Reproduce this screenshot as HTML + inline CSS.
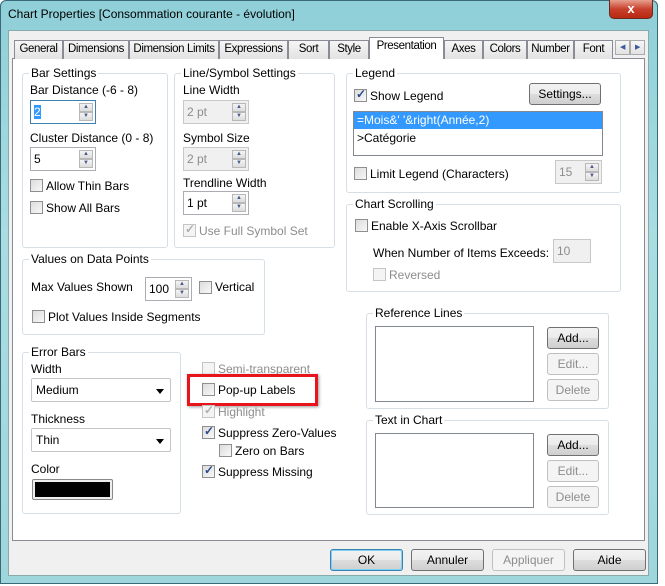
<!DOCTYPE html>
<html><head><meta charset="utf-8"><style>
*{box-sizing:border-box}
body{margin:0;width:665px;height:586px;overflow:hidden;background:#fff;font-family:"Liberation Sans",sans-serif;font-size:12px;color:#000;position:relative}
.a{position:absolute}
.frame{left:0;top:0;width:658px;height:584px;background:linear-gradient(180deg,#8fcfd8 0%,#a9dde2 40%,#9fd6dc 100%);border:1px solid #3a6a78;border-radius:6px 6px 0 0}
.body{left:8px;top:30px;width:641px;height:546px;background:#f0f0f0;border:1px solid #8aa}
.panel{left:12px;top:58px;width:633px;height:483px;background:#fff;border:1px solid #898c95}
.tab{position:absolute;top:40px;height:19px;background:linear-gradient(#f6f6f6,#e2e2e2);border:1px solid #898c95;border-bottom:none;text-align:center;line-height:17px;font-size:11.5px;white-space:nowrap;overflow:hidden;letter-spacing:-0.4px}
.grp{position:absolute;border:1px solid #d5dfe5;border-radius:3px}
.grp>span{position:absolute;top:-8px;left:6px;background:#fff;padding:0 2px;line-height:14px}
.t{position:absolute;white-space:nowrap}
.g{color:#8d8d8d}
.cb{position:absolute;width:13px;height:13px;border:1px solid #8f8f8f;background:linear-gradient(135deg,#dcdcdc,#f8f8f8)}
.cb.d{border-color:#c5c5c5;background:#f4f4f4}
.chk::after{content:"✓";position:absolute;left:1px;top:-3px;font-size:12px;color:#2b4a8a;font-weight:bold}
.chk.d::after{color:#b0b0b0}
.spin{position:absolute;height:24px;border:1px solid #abadb3;background:#fff;padding:3px 3px;line-height:16px}
.spin.d{background:#f0f0f0;color:#8d8d8d;border-color:#c8c8c8}
.arr{position:absolute;right:2px;width:14px;height:9px;border:1px solid #b8b8b8;background:linear-gradient(#f4f4f4,#dcdcdc);font-size:6px;line-height:7px;text-align:center;color:#4a5a8a}
.btn{position:absolute;height:22px;border:1px solid #707070;border-radius:3px;background:linear-gradient(#f2f2f2 0%,#ebebeb 50%,#dddddd 51%,#cfcfcf 100%);text-align:center;line-height:20px}
.btn.d{border-color:#c0c0c0;color:#8d8d8d;background:#f4f4f4}
.lst{position:absolute;background:#fff;border:1px solid #828790}
.combo{position:absolute;height:24px;border:1px solid #c5c5c5;border-radius:2px;background:#fff;padding:4px 4px;line-height:14px}
.combo::after{content:"";position:absolute;right:6px;top:10px;border:4px solid transparent;border-top:5px solid #000}
</style></head><body>
<div class="a" style="left:658px;top:0;width:7px;height:586px;background:#fff"></div>
<div class="a frame"></div>
<div class="t" style="left:8px;top:7px;font-size:12px">Chart Properties [Consommation courante - évolution]</div>
<div class="a" style="left:609px;top:0;width:44px;height:19px;border:1px solid #6b2a20;border-top:none;border-radius:0 0 5px 5px;background:linear-gradient(#e8a090,#c8402c 50%,#b82810);color:#fff;text-align:center;font-weight:bold;font-size:13px;line-height:17px">x</div>
<div class="a body"></div>
<div class="a panel"></div>
<div class="tab" style="left:14px;width:49px">General</div>
<div class="tab" style="left:63px;width:66px">Dimensions</div>
<div class="tab" style="left:129px;width:90px">Dimension Limits</div>
<div class="tab" style="left:219px;width:69px">Expressions</div>
<div class="tab" style="left:288px;width:41px">Sort</div>
<div class="tab" style="left:329px;width:40px">Style</div>
<div class="tab" style="left:369px;top:37px;height:22px;width:75px;background:#fff">Presentation</div>
<div class="tab" style="left:444px;width:39px">Axes</div>
<div class="tab" style="left:483px;width:44px">Colors</div>
<div class="tab" style="left:527px;width:47px">Number</div>
<div class="tab" style="left:574px;width:39px">Font</div>
<div class="tab" style="left:615px;top:40px;width:15px;height:15px;border:1px solid #aaa;font-size:7px;line-height:13px;color:#3a5a9a">◀</div>
<div class="tab" style="left:630px;top:40px;width:15px;height:15px;border:1px solid #aaa;font-size:7px;line-height:13px;color:#3a5a9a">▶</div>

<div class="grp" style="left:22px;top:73px;width:146px;height:175px"><span>Bar Settings</span></div>
<div class="t" style="left:30px;top:83px">Bar Distance (-6 - 8)</div>
<div class="spin" style="left:30px;top:100px;width:66px;border-color:#3c7fb1"><span style="background:#3399ff;color:#fff">2</span><div class="arr" style="top:2px">▲</div><div class="arr" style="top:11px">▼</div></div>
<div class="t" style="left:30px;top:131px">Cluster Distance (0 - 8)</div>
<div class="spin" style="left:30px;top:147px;width:66px">5<div class="arr" style="top:2px">▲</div><div class="arr" style="top:11px">▼</div></div>
<div class="cb" style="left:30px;top:179px"></div><div class="t" style="left:46px;top:179px">Allow Thin Bars</div>
<div class="cb" style="left:30px;top:201px"></div><div class="t" style="left:46px;top:201px">Show All Bars</div>

<div class="grp" style="left:174px;top:73px;width:161px;height:175px"><span>Line/Symbol Settings</span></div>
<div class="t" style="left:183px;top:83px">Line Width</div>
<div class="spin d" style="left:183px;top:100px;width:66px">2 pt<div class="arr" style="top:2px">▲</div><div class="arr" style="top:11px">▼</div></div>
<div class="t" style="left:183px;top:131px">Symbol Size</div>
<div class="spin d" style="left:183px;top:147px;width:66px">2 pt<div class="arr" style="top:2px">▲</div><div class="arr" style="top:11px">▼</div></div>
<div class="t" style="left:183px;top:176px">Trendline Width</div>
<div class="spin" style="left:183px;top:191px;width:66px">1 pt<div class="arr" style="top:2px">▲</div><div class="arr" style="top:11px">▼</div></div>
<div class="cb d chk" style="left:183px;top:224px"></div><div class="t g" style="left:199px;top:224px">Use Full Symbol Set</div>

<div class="grp" style="left:22px;top:259px;width:243px;height:76px"><span>Values on Data Points</span></div>
<div class="t" style="left:31px;top:280px">Max Values Shown</div>
<div class="spin" style="left:145px;top:277px;width:47px">100<div class="arr" style="top:2px">▲</div><div class="arr" style="top:11px">▼</div></div>
<div class="cb" style="left:199px;top:281px"></div><div class="t" style="left:215px;top:280px">Vertical</div>
<div class="cb" style="left:32px;top:310px"></div><div class="t" style="left:48px;top:310px">Plot Values Inside Segments</div>

<div class="grp" style="left:22px;top:352px;width:159px;height:162px"><span>Error Bars</span></div>
<div class="t" style="left:31px;top:362px">Width</div>
<div class="combo" style="left:31px;top:378px;width:140px">Medium</div>
<div class="t" style="left:31px;top:412px">Thickness</div>
<div class="combo" style="left:31px;top:428px;width:140px">Thin</div>
<div class="t" style="left:31px;top:462px">Color</div>
<div class="a" style="left:32px;top:479px;width:81px;height:21px;border:1px solid #888;border-radius:2px;background:#eee;padding:2px"><div style="width:100%;height:100%;background:#000"></div></div>

<div class="cb d" style="left:202px;top:362px"></div><div class="t g" style="left:218px;top:362px">Semi-transparent</div>
<div class="a" style="left:187px;top:374px;width:131px;height:32px;border:3px solid #e8141b;box-shadow:1px 1px 3px rgba(0,0,0,.4)"></div>
<div class="cb" style="left:202px;top:383px"></div><div class="t" style="left:218px;top:383px">Pop-up Labels</div>
<div class="cb d chk" style="left:202px;top:405px"></div><div class="t g" style="left:218px;top:405px">Highlight</div>
<div class="cb chk" style="left:202px;top:426px"></div><div class="t" style="left:218px;top:426px">Suppress Zero-Values</div>
<div class="cb" style="left:219px;top:444px"></div><div class="t" style="left:235px;top:444px">Zero on Bars</div>
<div class="cb chk" style="left:202px;top:465px"></div><div class="t" style="left:218px;top:465px">Suppress Missing</div>

<div class="grp" style="left:346px;top:73px;width:275px;height:120px"><span>Legend</span></div>
<div class="cb chk" style="left:354px;top:89px"></div><div class="t" style="left:370px;top:89px">Show Legend</div>
<div class="btn" style="left:529px;top:83px;width:72px">Settings...</div>
<div class="lst" style="left:353px;top:111px;width:250px;height:45px"><div style="background:#3399ff;color:#fff;padding:1px 3px;height:17px">=Mois&amp;' '&amp;right(Année,2)</div><div style="padding:2px 3px">&gt;Catégorie</div></div>
<div class="cb" style="left:354px;top:167px"></div><div class="t" style="left:370px;top:167px">Limit Legend (Characters)</div>
<div class="spin d" style="left:555px;top:160px;width:47px">15<div class="arr" style="top:2px">▲</div><div class="arr" style="top:11px">▼</div></div>

<div class="grp" style="left:346px;top:204px;width:275px;height:88px"><span>Chart Scrolling</span></div>
<div class="cb" style="left:355px;top:219px"></div><div class="t" style="left:371px;top:219px">Enable X-Axis Scrollbar</div>
<div class="t" style="left:373px;top:246px">When Number of Items Exceeds:</div>
<div class="spin d" style="left:553px;top:239px;width:38px">10</div>
<div class="cb d" style="left:373px;top:268px"></div><div class="t g" style="left:389px;top:268px">Reversed</div>

<div class="grp" style="left:366px;top:313px;width:243px;height:96px"><span>Reference Lines</span></div>
<div class="lst" style="left:375px;top:326px;width:159px;height:76px"></div>
<div class="btn" style="left:547px;top:327px;width:52px">Add...</div>
<div class="btn d" style="left:547px;top:353px;width:52px">Edit...</div>
<div class="btn d" style="left:547px;top:379px;width:52px">Delete</div>

<div class="grp" style="left:366px;top:420px;width:243px;height:95px"><span>Text in Chart</span></div>
<div class="lst" style="left:375px;top:433px;width:159px;height:75px"></div>
<div class="btn" style="left:547px;top:434px;width:52px">Add...</div>
<div class="btn d" style="left:547px;top:460px;width:52px">Edit...</div>
<div class="btn d" style="left:547px;top:486px;width:52px">Delete</div>

<div class="btn" style="left:330px;top:549px;width:73px;border-color:#3c7fb1;box-shadow:inset 0 0 0 1px #7ed3f0">OK</div>
<div class="btn" style="left:411px;top:549px;width:73px">Annuler</div>
<div class="btn d" style="left:492px;top:549px;width:73px">Appliquer</div>
<div class="btn" style="left:573px;top:549px;width:73px">Aide</div>
</body></html>
